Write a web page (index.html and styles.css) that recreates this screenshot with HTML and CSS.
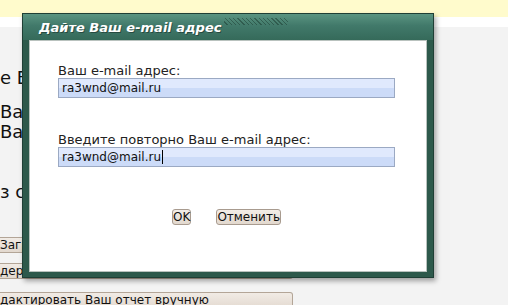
FILE: index.html
```html
<!DOCTYPE html>
<html lang="ru">
	<head>
		<title>Отчет</title>
		<link rel="stylesheet" href="styles.css">
	</head>
	<body>
		<div class="notice"></div>
		<div class="strip"></div>
		<div class="page">
			<p class="lead">е Вы</p>
			<p class="text">Ваш<br>Ваш</p>
			<p class="text gap">з сл</p>
			<span class="pbtn first">Загрузить</span>
			<span class="pbtn second">держимое вашего отчета в текстовое поле</span>
			<span class="pbtn third">дактировать Ваш отчет вручную</span>
		</div>

		<div class="dialog">
			<div class="dialog-title">
				<span>Дайте Ваш e-mail адрес</span>
				<span class="grip"></span>
			</div>
			<div class="dialog-body">
				<label>Ваш e-mail адрес:</label>
				<div class="field">ra3wnd@mail.ru</div>
				<label class="second-label">Введите повторно Ваш e-mail адрес:</label>
				<div class="field">ra3wnd@mail.ru<span class="caret"></span></div>
				<div class="actions">
					<span class="btn">OK</span>
					<span class="btn">Отменить</span>
				</div>
			</div>
		</div>
	</body>
</html>
```

FILE: styles.css
```css
body, html {margin:0;padding:0;font-family:"DejaVu Sans",sans-serif;color:#111;background-color:#f3f3f3;overflow:hidden;}
.notice {height:17px;background-color:#fffbcc;}
.strip {height:10px;background-color:#fff;}
.page {display:flex;flex-direction:column;align-items:flex-start;padding-top:41px;}
.page p {margin:0;font-size:18px;line-height:20px;white-space:nowrap;}
.lead {margin-bottom:14px !important;}
.gap {margin-top:40px !important;}
.pbtn {display:block;box-sizing:border-box;height:16px;font-size:12px;line-height:14px;white-space:nowrap;overflow:hidden;background:linear-gradient(#f1ebe5,#e2d8ce);border:1px solid #b3a597;border-left:0;border-radius:0 3px 3px 0;}
.first {margin-top:35px;width:100px;}
.second {margin-top:10px;width:293px;}
.third {margin-top:13px;width:293px;height:18px;}

.dialog {position:absolute;left:22px;top:13px;width:412px;height:265px;box-sizing:border-box;display:flex;flex-direction:column;background-color:#2d594b;border:1px solid #1f3f35;box-shadow:2px 3px 5px rgba(0,0,0,0.35);}
.dialog-title {height:26px;display:flex;align-items:center;padding-left:16px;background:linear-gradient(#5a9481,#41796a 45%,#356a5a);color:#fff;font-weight:bold;font-style:italic;font-size:13px;text-shadow:1px 1px 0 rgba(0,0,0,0.35);}
.grip {align-self:flex-start;margin-top:4px;margin-left:3px;width:64px;height:7px;background:repeating-linear-gradient(45deg,transparent 0 2px,rgba(20,50,40,0.45) 2px 3px);}
.dialog-body {flex:1;margin:0 6px 5px 6px;background-color:#fff;border:1px solid #b9c2be;padding:22px 31px 0 28px;}
label {display:block;font-size:13px;line-height:15px;color:#222;}
.second-label {margin-top:34px;}
.field {box-sizing:border-box;height:20px;padding:0 3px;font-size:12px;line-height:18px;color:#111;background:linear-gradient(#e0e9fd 50%,#ccdbf8 50%);border:1px solid #9ba9c3;}
.caret {display:inline-block;width:1px;height:14px;margin-left:1px;vertical-align:-3px;background-color:#000;}
.actions {display:flex;justify-content:center;gap:25px;margin-top:42px;}
.btn {box-sizing:border-box;height:16px;padding:0;font-size:12px;line-height:14px;color:#111;background:linear-gradient(#f3ede7,#e2d8ce);border:1px solid #a89b8f;border-radius:3px;}
```
